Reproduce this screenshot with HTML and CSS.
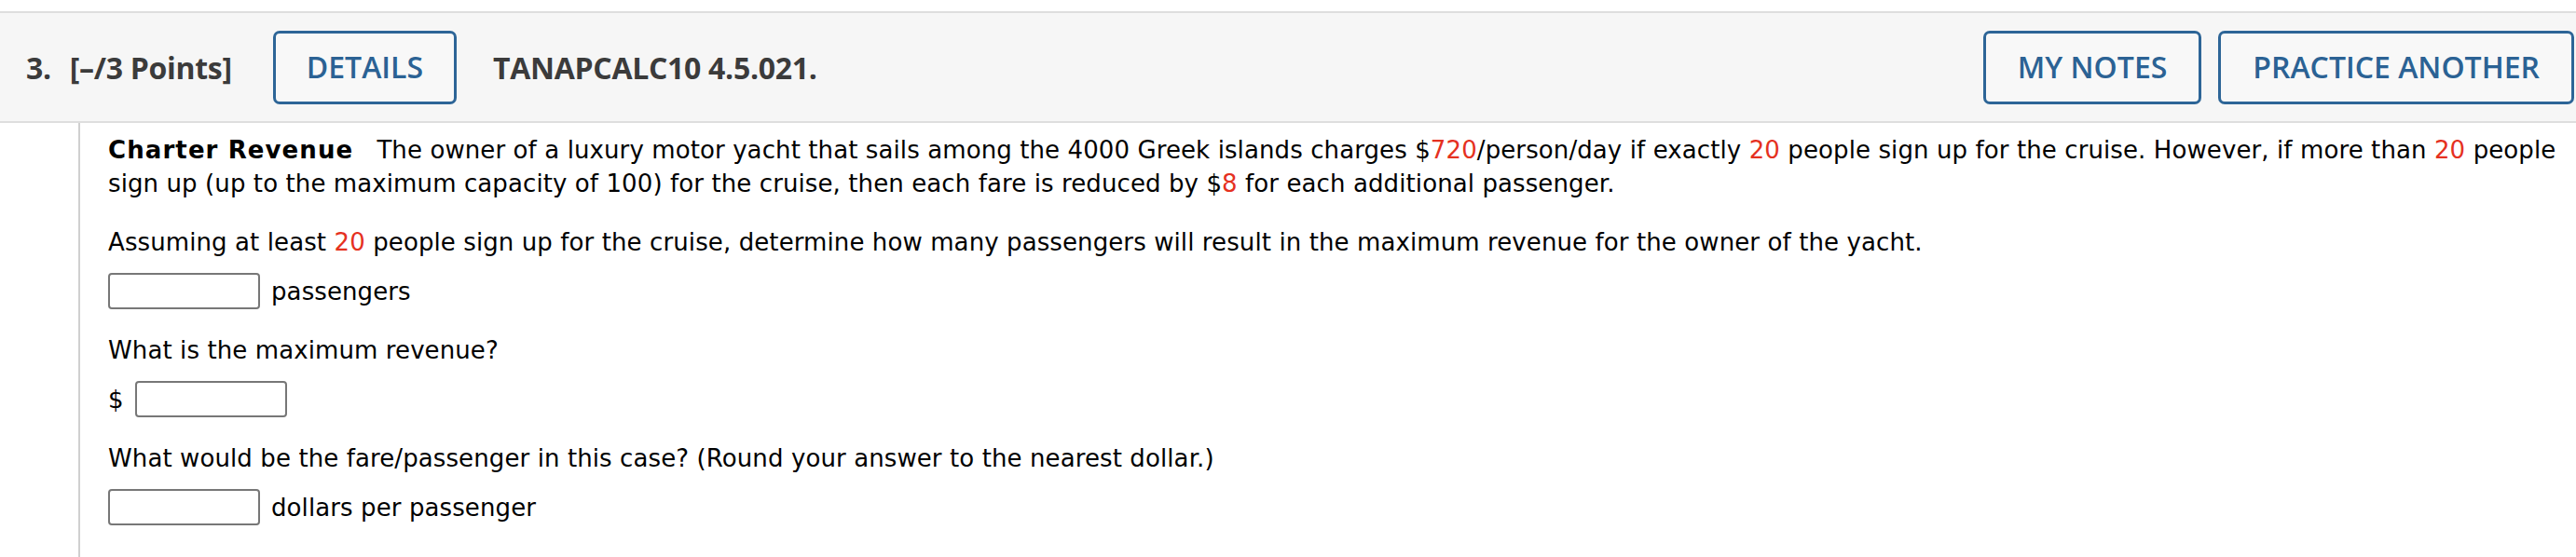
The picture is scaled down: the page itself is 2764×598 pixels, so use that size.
FILE: index.html
```html
<!DOCTYPE html>
<html>
<head>
<meta charset="utf-8">
<link rel="stylesheet" href="styles.css">
</head>
<body>
<div class="header">
  <div class="hleft">
    <span class="qnum">3.</span>
    <span class="points">[–/3 Points]</span>
    <button class="btn">DETAILS</button>
    <span class="code">TANAPCALC10 4.5.021.</span>
  </div>
  <div class="hright">
    <button class="btn">MY NOTES</button>
    <button class="btn">PRACTICE ANOTHER</button>
  </div>
</div>
<div class="content">
  <p class="para"><b class="title">Charter Revenue</b>&nbsp;&nbsp; The owner of a luxury motor yacht that sails among the 4000 Greek islands charges $<span class="red">720</span>/person/day if exactly <span class="red">20</span> people sign up for the cruise. However, if more than <span class="red">20</span> people sign up (up to the maximum capacity of 100) for the cruise, then each fare is reduced by $<span class="red">8</span> for each additional passenger.</p>
  <p class="para">Assuming at least <span class="red">20</span> people sign up for the cruise, determine how many passengers will result in the maximum revenue for the owner of the yacht.</p>
  <div class="answer"><span class="box"></span><span>passengers</span></div>
  <p class="para">What is the maximum revenue?</p>
  <div class="answer"><span>$</span><span class="box"></span></div>
  <p class="para">What would be the fare/passenger in this case? (Round your answer to the nearest dollar.)</p>
  <div class="answer"><span class="box"></span><span>dollars per passenger</span></div>
</div>
</body>
</html>
```
FILE: styles.css
```css
html, body {
  margin: 0;
  padding: 0;
  background: #fff;
}
body {
  width: 2764px;
  height: 598px;
  overflow: hidden;
  display: flex;
  flex-direction: column;
}
.header {
  flex: none;
  margin-top: 12px;
  height: 116px;
  border-top: 2px solid #dedede;
  border-bottom: 2px solid #dedede;
  background: #f6f6f6;
  display: flex;
  align-items: center;
  justify-content: space-between;
  padding: 0 2px 0 28px;
  font-family: "Open Sans", sans-serif;
}
.hleft, .hright {
  display: flex;
  align-items: center;
}
.hright {
  gap: 18px;
}
.qnum, .points, .code {
  font-weight: 700;
  font-size: 32px;
  color: #3b3b3b;
  letter-spacing: -0.3px;
}
.qnum {
  margin-right: 20px;
}
.points {
  margin-right: 44px;
}
.code {
  margin-left: 39px;
}
.btn {
  font-family: "Open Sans", sans-serif;
  font-weight: 600;
  font-size: 32px;
  color: #2b6294;
  background: #f8f8f8;
  border: 3px solid #2d6597;
  border-radius: 7px;
  height: 79px;
  padding: 0 34px;
  margin: 0;
  line-height: 1;
}
.hleft .btn {
  padding: 0 33px;
}
.content {
  flex: 1;
  margin-left: 84px;
  border-left: 2px solid #d0d0d0;
  padding: 11px 10px 0 30px;
  font-family: "DejaVu Sans", Verdana, sans-serif;
  font-size: 26px;
  line-height: 36px;
  letter-spacing: 0.1px;
  color: #000;
}
.para {
  margin: 0 0 27px 0;
}
.title {
  font-weight: 700;
  letter-spacing: 1.1px;
}
.red {
  color: #e5311f;
}
.answer {
  display: flex;
  align-items: center;
  gap: 12px;
  margin: -13px 0 25px 0;
  height: 41px;
}
.box {
  display: inline-block;
  width: 159px;
  height: 35px;
  border: 2px solid #777;
  border-radius: 4px;
  background: #fff;
}
```
